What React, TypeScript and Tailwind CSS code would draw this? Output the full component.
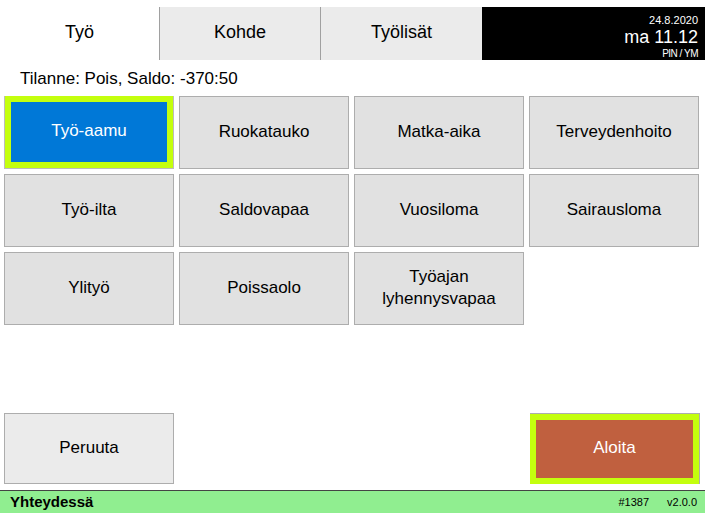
import React from "react";

const ROWS: string[][] = [
  ["Työ-aamu", "Ruokatauko", "Matka-aika", "Terveydenhoito"],
  ["Työ-ilta", "Saldovapaa", "Vuosiloma", "Sairausloma"],
  ["Ylityö", "Poissaolo", "Työajan\nlyhennysvapaa"],
];

const TABS = ["Työ", "Kohde", "Työlisät"];

function Tab({ label, active, width }: { label: string; active: boolean; width: string }) {
  return (
    <div
      className={`${width} flex items-center justify-center pb-[2px] text-[18px] text-black ${
        active ? "bg-white" : "bg-[#ebebeb] border-l border-[#a0a0a0]"
      }`}
    >
      {label}
    </div>
  );
}

function ActivityButton({ label, selected }: { label: string; selected?: boolean }) {
  if (selected) {
    return (
      <div className="h-[73px] border border-[#bcbcbc] border-t-0 bg-[#c4ff0e] p-[6px]">
        <div className="h-full bg-[#0078d7] flex items-center justify-center pb-[2px] text-white text-[17px]">
          {label}
        </div>
      </div>
    );
  }
  return (
    <div className="h-[73px] bg-[#e1e1e1] border border-[#adadad] flex items-center justify-center pb-[2px] text-center text-[17px] text-black leading-[22px] whitespace-pre-line">
      {label}
    </div>
  );
}

export default function App() {
  return (
    <div
      className="w-[713px] h-[529px] bg-white flex flex-col overflow-hidden"
      style={{ fontFamily: '"Liberation Sans", Arial, sans-serif' }}
    >
      {/* Tabs + clock */}
      <div className="mt-[7px] h-[53px] w-[705px] flex">
        <Tab label={TABS[0]} active width="w-[159px]" />
        <Tab label={TABS[1]} active={false} width="w-[161px]" />
        <Tab label={TABS[2]} active={false} width="w-[162px]" />
        <div className="flex-1 bg-black text-white flex flex-col items-end pr-[7px] pt-[7px]">
          <span className="text-[11px] leading-[12px]">24.8.2020</span>
          <span className="text-[18px] leading-[20px] mt-[1px]">ma 11.12</span>
          <span className="text-[10px] leading-[11px] tracking-[-0.5px] mt-[1px]">PIN / YM</span>
        </div>
      </div>

      {/* Status line */}
      <div className="h-[36px] pl-[20px] flex items-center text-[17px] text-black pt-[1px]">
        Tilanne: Pois, Saldo: -370:50
      </div>

      {/* Activity grid */}
      <div className="ml-[4px] w-[695px] grid grid-cols-4 gap-[5px]">
        {ROWS.map((row, r) =>
          row.map((label, c) => (
            <ActivityButton key={`${r}-${c}`} label={label} selected={r === 0 && c === 0} />
          ))
        )}
      </div>

      {/* Actions */}
      <div className="mt-[88px] ml-[4px] w-[696px] h-[71px] flex justify-between">
        <div className="w-[170px] h-full bg-[#ebebeb] border border-[#adadad] flex items-center justify-center pb-[2px] text-[17px] text-black">
          Peruuta
        </div>
        <div className="w-[170px] h-full border-t border-r border-[#adadad] bg-[#c4ff0e] p-[6px]">
          <div className="h-full bg-[#c0603f] flex items-center justify-center pb-[2px] text-white text-[17px]">
            Aloita
          </div>
        </div>
      </div>

      {/* Connection bar */}
      <div className="mt-[6px] w-[705px] h-[23px] border-t border-[#444444] bg-[#90ee90] flex items-center pl-[10px] pr-[8px]">
        <span className="font-bold text-[15px] text-black">Yhteydessä</span>
        <span className="ml-auto text-[11px] text-black">#1387</span>
        <span className="ml-[18px] text-[11px] text-black">v2.0.0</span>
      </div>
    </div>
  );
}
